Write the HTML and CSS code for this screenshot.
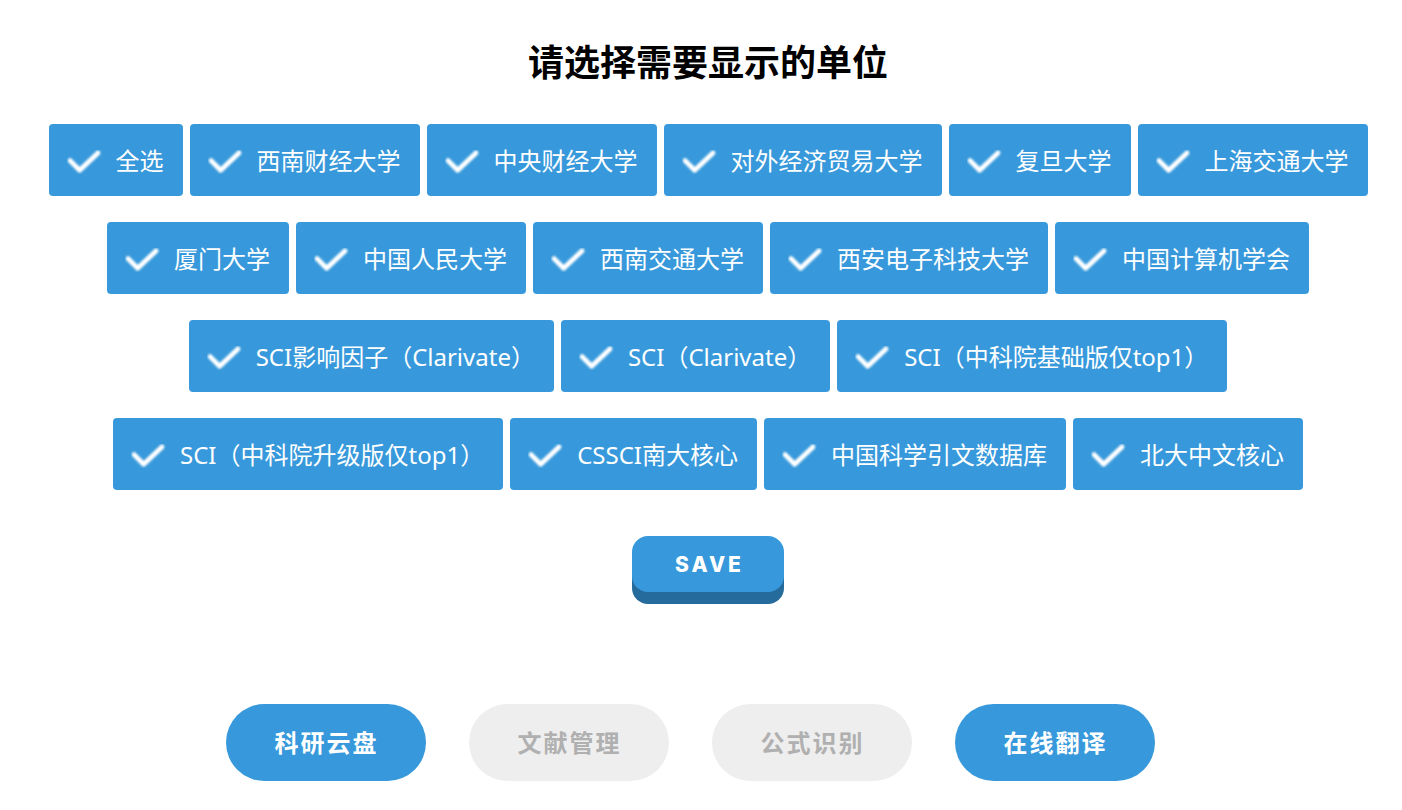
FILE: index.html
```html
<!DOCTYPE html>
<html lang="zh-CN">
<head>
<meta charset="utf-8">
<title>请选择需要显示的单位</title>
<link rel="stylesheet" href="styles.css">
</head>
<body>
<div class="page">
  <h1 class="title">请选择需要显示的单位</h1>
  <div class="chips">
    <div class="row">
      <div class="chip"><svg class="check" viewBox="0 0 36 26"><polyline points="3,11 13,21 32,3"/></svg><span>全选</span></div>
      <div class="chip"><svg class="check" viewBox="0 0 36 26"><polyline points="3,11 13,21 32,3"/></svg><span>西南财经大学</span></div>
      <div class="chip"><svg class="check" viewBox="0 0 36 26"><polyline points="3,11 13,21 32,3"/></svg><span>中央财经大学</span></div>
      <div class="chip"><svg class="check" viewBox="0 0 36 26"><polyline points="3,11 13,21 32,3"/></svg><span>对外经济贸易大学</span></div>
      <div class="chip"><svg class="check" viewBox="0 0 36 26"><polyline points="3,11 13,21 32,3"/></svg><span>复旦大学</span></div>
      <div class="chip"><svg class="check" viewBox="0 0 36 26"><polyline points="3,11 13,21 32,3"/></svg><span>上海交通大学</span></div>
    </div>
    <div class="row">
      <div class="chip"><svg class="check" viewBox="0 0 36 26"><polyline points="3,11 13,21 32,3"/></svg><span>厦门大学</span></div>
      <div class="chip"><svg class="check" viewBox="0 0 36 26"><polyline points="3,11 13,21 32,3"/></svg><span>中国人民大学</span></div>
      <div class="chip"><svg class="check" viewBox="0 0 36 26"><polyline points="3,11 13,21 32,3"/></svg><span>西南交通大学</span></div>
      <div class="chip"><svg class="check" viewBox="0 0 36 26"><polyline points="3,11 13,21 32,3"/></svg><span>西安电子科技大学</span></div>
      <div class="chip"><svg class="check" viewBox="0 0 36 26"><polyline points="3,11 13,21 32,3"/></svg><span>中国计算机学会</span></div>
    </div>
    <div class="row">
      <div class="chip"><svg class="check" viewBox="0 0 36 26"><polyline points="3,11 13,21 32,3"/></svg><span>SCI影响因子（Clarivate）</span></div>
      <div class="chip"><svg class="check" viewBox="0 0 36 26"><polyline points="3,11 13,21 32,3"/></svg><span>SCI（Clarivate）</span></div>
      <div class="chip"><svg class="check" viewBox="0 0 36 26"><polyline points="3,11 13,21 32,3"/></svg><span>SCI（中科院基础版仅top1）</span></div>
    </div>
    <div class="row">
      <div class="chip"><svg class="check" viewBox="0 0 36 26"><polyline points="3,11 13,21 32,3"/></svg><span>SCI（中科院升级版仅top1）</span></div>
      <div class="chip"><svg class="check" viewBox="0 0 36 26"><polyline points="3,11 13,21 32,3"/></svg><span>CSSCI南大核心</span></div>
      <div class="chip"><svg class="check" viewBox="0 0 36 26"><polyline points="3,11 13,21 32,3"/></svg><span>中国科学引文数据库</span></div>
      <div class="chip"><svg class="check" viewBox="0 0 36 26"><polyline points="3,11 13,21 32,3"/></svg><span>北大中文核心</span></div>
    </div>
  </div>
  <div class="save-wrap">
    <button class="save">SAVE</button>
  </div>
</div>
<div class="tabs">
  <button class="tab active">科研云盘</button>
  <button class="tab">文献管理</button>
  <button class="tab">公式识别</button>
  <button class="tab active">在线翻译</button>
</div>
<svg width="0" height="0" style="position:absolute">
  <defs>
    <filter id="soft" x="-20%" y="-20%" width="140%" height="140%">
      <feGaussianBlur stdDeviation="0.9"/>
    </filter>
  </defs>
</svg>
</body>
</html>
```

FILE: styles.css
```css
html, body {
  margin: 0;
  padding: 0;
  background: #ffffff;
}

body {
  width: 1402px;
  height: 810px;
  overflow: hidden;
  font-family: "Noto Sans", "Noto Sans CJK SC", sans-serif;
}

.page {
  padding: 35px 0 0 14px;
  display: flex;
  flex-direction: column;
  align-items: center;
}

.title {
  margin: 0;
  height: 50px;
  line-height: 50px;
  font-size: 36px;
  font-weight: 700;
  color: #000000;
  font-family: "Noto Sans CJK SC", sans-serif;
  text-align: center;
}

.chips {
  margin-top: 39px;
  display: flex;
  flex-direction: column;
  gap: 26px;
  align-items: center;
}

.row {
  display: flex;
  gap: 7px;
  justify-content: center;
}

.chip {
  height: 72px;
  box-sizing: border-box;
  display: flex;
  align-items: center;
  gap: 14px;
  padding: 0 19px 0 18px;
  background: #3799db;
  border-radius: 4px;
  color: #ffffff;
  font-size: 24px;
  line-height: 1;
  white-space: nowrap;
}

.chip span {
  position: relative;
  top: 1px;
}

.check {
  width: 35px;
  height: 25px;
  flex: none;
  position: relative;
  top: 2px;
}

.check polyline {
  fill: none;
  stroke: #ffffff;
  stroke-width: 5;
  stroke-linecap: round;
  stroke-linejoin: round;
  filter: url(#soft);
}

.save-wrap {
  margin-top: 46px;
  height: 68px;
}

.save {
  width: 152px;
  height: 56px;
  border: none;
  border-radius: 16px;
  background: #3799db;
  box-shadow: 0 12px 0 #256b9b;
  color: #ffffff;
  font-family: "Inter", "Liberation Sans", sans-serif;
  font-weight: 800;
  font-size: 21px;
  letter-spacing: 3px;
  padding: 0 0 0 3px;
  cursor: pointer;
}

.tabs {
  margin-top: 100px;
  padding-right: 22px;
  display: flex;
  justify-content: center;
  gap: 43px;
}

.tab {
  width: 200px;
  height: 77px;
  border: none;
  border-radius: 39px;
  background: #eeeeee;
  color: #b0b0b0;
  font-family: "Noto Sans CJK SC", sans-serif;
  font-weight: 700;
  font-size: 24px;
  letter-spacing: 2px;
  padding: 0 0 3px 2px;
  cursor: pointer;
}

.tab.active {
  background: #3799db;
  color: #ffffff;
}
```
